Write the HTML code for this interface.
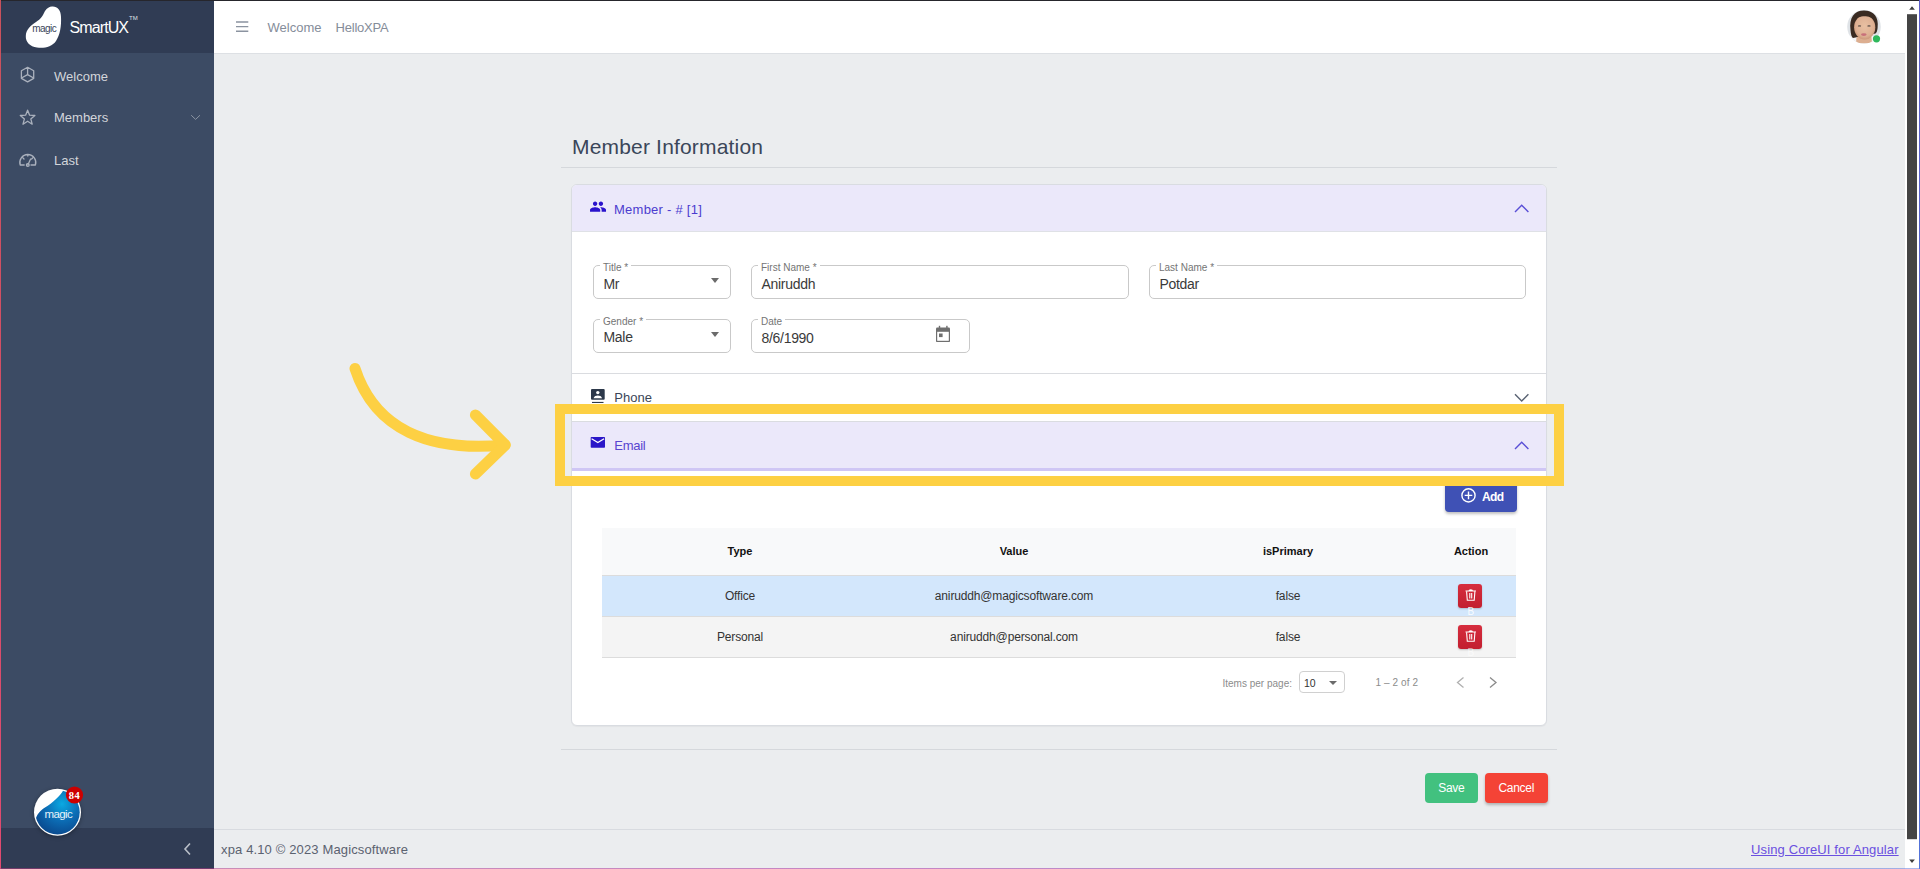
<!DOCTYPE html>
<html><head><meta charset="utf-8">
<style>
*{box-sizing:border-box;margin:0;padding:0}
html,body{width:1920px;height:869px;overflow:hidden;background:#ebedef;font-family:"Liberation Sans",sans-serif}
.a{position:absolute;white-space:nowrap}
#sidebar{position:absolute;left:0;top:0;width:214px;height:869px;background:#3c4b64}
#brand{position:absolute;left:0;top:0;width:214px;height:53px;background:#303c54}
#sfoot{position:absolute;left:0;top:828px;width:214px;height:41px;background:#303c54}
#header{position:absolute;left:214px;top:0;width:1691px;height:54px;background:#fff;border-bottom:1px solid #dde0e4}
.nav{position:absolute;left:54px;font-size:13px;color:#d3d6db;line-height:13px}
#footer{position:absolute;left:214px;top:829px;width:1691px;height:40px;background:#ebedef;border-top:1px solid #d8dbe0}
#scroll{position:absolute;left:1905px;top:0;width:15px;height:869px;background:#fff}
.frameL{position:absolute;left:0;top:0;width:1px;height:869px;background:linear-gradient(#c9525c,#e04a70)}
.frameT{position:absolute;left:0;top:0;width:1920px;height:1px;background:#26262c}
.frameR{position:absolute;left:1919px;top:0;width:1px;height:869px;background:linear-gradient(#5b5dc8,#5272d8)}
.frameB{position:absolute;left:0;top:868px;width:1920px;height:1px;background:linear-gradient(90deg,rgba(176,60,125,.53) 0%,rgba(163,41,160,.53) 47%,rgba(116,69,178,.53) 73%,rgba(93,122,222,.53) 100%)}
.hr{position:absolute;left:561px;width:996px;height:1px;background:#d5d8dc}
#card{position:absolute;left:571px;top:184px;width:976px;height:542px;background:#fff;border:1px solid #d9dce1;border-radius:6px;box-shadow:0 1px 1px rgba(0,0,0,.04)}
.ph{position:absolute;left:0;width:974px;height:46px}
.fld{position:absolute;border:1px solid #c9c9c9;border-radius:5px;background:#fff}
.lbl{position:absolute;font-size:10px;line-height:10px;color:#747474;background:#fff;padding:0 3px;top:-3.5px;left:6px}
.val{position:absolute;font-size:14px;line-height:14px;color:#3a3a3a;left:9.5px;top:11px;letter-spacing:-0.3px}
.tri{position:absolute;width:0;height:0;border-left:4px solid transparent;border-right:4px solid transparent;border-top:5px solid #6b6b6b}
table{position:absolute;left:30px;top:343px;width:914px;border-collapse:collapse;font-size:12px;color:#333}
td,th{text-align:center;padding:0 0 0 2px;border-bottom:1px solid #dcdcdc}
th{height:47px;background:#f8f9fa;font-weight:bold;font-size:11px;color:#111}
td{height:41px;letter-spacing:-0.15px}
.del{display:inline-block;width:24px;height:24px;border-radius:3px;background:linear-gradient(#d62d3e,#c21f2f);vertical-align:middle;position:relative;box-shadow:0 1px 2px rgba(0,0,0,.2)}
.btn{position:absolute;border-radius:4px;color:#fff;font-size:12px;text-align:center;line-height:30px;letter-spacing:-0.3px}
</style></head><body>
<div id="sidebar"></div>
<div id="brand"></div>
<div id="sfoot"></div>
<div id="header"></div>
<div id="footer"></div>
<div id="scroll"></div>

<!-- brand -->
<svg class="a" style="left:0;top:0" width="214" height="53" viewBox="0 0 214 53">
  <path d="M52 6.5 C57 6 61 10 61 17 C61.5 26 60 35 56 41 C52 47 44 48.5 37 47.5 C30 46.5 25.5 42 25.8 36 C26 30 30 26 36 22 C41 19 42.5 16 45 11 C47 8 49.5 6.6 52 6.5Z" fill="#fff"/>
  <text x="32.3" y="32.2" font-family="Liberation Sans" font-size="10" fill="#3a4559" letter-spacing="-0.55">magic</text>
</svg>
<div class="a" style="left:69.5px;top:20px;font-size:16px;line-height:16px;color:#fff;letter-spacing:-0.9px">SmartUX</div>
<div class="a" style="left:129px;top:15px;font-size:6px;line-height:6px;color:#dfe2e6">TM</div>

<!-- nav -->
<div class="nav" style="top:69.5px">Welcome</div>
<div class="nav" style="top:111.3px">Members</div>
<div class="nav" style="top:154.3px">Last</div>
<svg class="a" style="left:0;top:53px" width="214" height="130" viewBox="0 53 214 130" fill="none" stroke="#aab1bd" stroke-width="1.3" stroke-linejoin="round" stroke-linecap="round">
  <path d="M27.6 67.3 L33.7 70.8 L33.7 78.4 L27.6 81.9 L21.4 78.4 L21.4 70.8 Z M27.6 67.3 L27.6 74.6 L21.9 77.8 M27.6 74.6 L33.2 77.8"/>
  <path d="M27.6 110.2 L29.6 115.2 L34.9 115.5 L30.8 118.9 L32.2 124.2 L27.6 121.2 L23 124.2 L24.4 118.9 L20.3 115.5 L25.6 115.2 Z"/>
  <path d="M20.2 165 A8 8 0 1 1 35.4 165 L31 165 M24.2 165 L20.2 165 M27.8 165 L30.6 159 M23 158 L24 159 M27.8 154.5 L27.8 156 M32.6 158 L31.6 159"/>
  <circle cx="27.8" cy="165" r="1.4"/>
  <path d="M191.5 115.5 L195.6 119.4 L199.7 115.5" stroke="#8c95a3" stroke-width="1"/>
</svg>

<!-- header -->
<svg class="a" style="left:230px;top:15px" width="25" height="25" viewBox="230 15 25 25"><path d="M236 22h12.3M236 26.6h12.3M236 31.2h12.3" stroke="#8b93a0" stroke-width="1.4"/></svg>
<div class="a" style="left:267.5px;top:21px;font-size:13px;line-height:13px;color:#858d9a">Welcome</div>
<div class="a" style="left:335.5px;top:21px;font-size:13px;line-height:13px;color:#858d9a;letter-spacing:-0.2px">HelloXPA</div>

<!-- avatar -->
<svg class="a" style="left:1840px;top:6px" width="48" height="44" viewBox="1840 6 48 44">
  <defs><clipPath id="ac"><circle cx="1864" cy="26.8" r="16.8"/></clipPath>
  <radialGradient id="skin" cx="0.5" cy="0.45" r="0.6"><stop offset="0" stop-color="#e8c0a2"/><stop offset="0.7" stop-color="#deb093"/><stop offset="1" stop-color="#c48f70"/></radialGradient></defs>
  <circle cx="1864" cy="26.8" r="16.8" fill="#dfe3e7"/>
  <g clip-path="url(#ac)">
    <rect x="1844" y="36" width="40" height="10" fill="#f4f5f6"/>
    <path d="M1850.5 30 C1849 18 1854 10.5 1864 10.5 C1874 10.5 1879 17 1877.6 28 C1877.3 31 1876.5 33 1875.5 33.5 L1853 38 C1851.5 37 1850.8 34 1850.5 30Z" fill="#3a2b22"/>
    <path d="M1856 43.5 L1856.5 37 L1871.5 37 L1872 43.5Z" fill="#dcae90"/>
    <ellipse cx="1864.7" cy="27.3" rx="10.6" ry="12.2" fill="url(#skin)"/>
    <path d="M1853.5 22 C1854.5 15 1859 14 1864.5 14 C1870.5 14 1875 16 1875.8 22 C1873 17.5 1868 16.3 1864.5 16.3 C1860.5 16.3 1856 17.8 1853.5 22Z" fill="#3a2b22"/>
    <ellipse cx="1859.5" cy="25.9" rx="1.7" ry="0.9" fill="#7a665a"/>
    <ellipse cx="1869" cy="25.9" rx="1.7" ry="0.9" fill="#7a665a"/>
    <ellipse cx="1863.8" cy="34.6" rx="2.8" ry="1.4" fill="#c8707a"/>
  </g>
  <circle cx="1876.5" cy="38.8" r="3.6" fill="#2eb85c"/>
</svg>
<!-- scrollbar -->
<svg class="a" style="left:1905px;top:0" width="15" height="869" viewBox="1905 0 15 869">
  <path d="M1909.2 9.8 L1912 6.3 L1914.9 9.8Z" fill="#3d3d3d"/>
  <rect x="1907" y="14.2" width="10" height="825" fill="#444"/>
  <path d="M1909.2 859.4 L1912 863 L1914.9 859.4Z" fill="#3d3d3d"/>
</svg>

<!-- title -->
<div class="a" style="left:572px;top:135.5px;font-size:21px;line-height:21px;color:#3a4659;letter-spacing:0.18px">Member Information</div>
<div class="hr" style="top:167px"></div>
<div class="hr" style="top:749px"></div>

<div id="card">
  <!-- member header -->
  <div class="ph" style="top:0;background:#ebe8fa;border-radius:5px 5px 0 0"></div>
  <div class="ph" style="top:46px;height:1px;background:#dfe1e6"></div>
  <!-- phone -->
  <div class="ph" style="top:188px;height:1px;background:#dadce0"></div>
  <div class="ph" style="top:236px;height:1px;background:#dadce0"></div>
  <div class="ph" style="top:237px;height:46px;background:#ebe8fa"></div>
  <div class="ph" style="top:283px;height:3px;background:#cfc6f5"></div>

  <div class="fld" style="left:21px;top:80px;width:138px;height:34px"><span class="lbl">Title *</span><span class="val" style="top:10.5px">Mr</span><span class="tri" style="left:117px;top:12px"></span></div>
  <div class="fld" style="left:179px;top:80px;width:378px;height:34px"><span class="lbl">First Name *</span><span class="val">Aniruddh</span></div>
  <div class="fld" style="left:577px;top:80px;width:377px;height:34px"><span class="lbl">Last Name *</span><span class="val">Potdar</span></div>
  <div class="fld" style="left:21px;top:134px;width:138px;height:34px"><span class="lbl">Gender *</span><span class="val" style="top:10px">Male</span><span class="tri" style="left:117px;top:12px"></span></div>
  <div class="fld" style="left:179px;top:134px;width:219px;height:34px"><span class="lbl">Date</span><span class="val">8/6/1990</span></div>

  <table>
    <tr><th style="width:274px">Type</th><th style="width:274px">Value</th><th style="width:274px">isPrimary</th><th>Action</th></tr>
    <tr style="background:#d3e7fc"><td>Office</td><td>aniruddh@magicsoftware.com</td><td>false</td><td style="padding:0"><span class="del"></span></td></tr>
    <tr style="background:#f4f4f4"><td>Personal</td><td>aniruddh@personal.com</td><td>false</td><td style="padding:0"><span class="del"></span></td></tr>
  </table>

  <!-- pagination -->
  <div class="a" style="left:650.5px;top:493.5px;font-size:10px;line-height:10px;color:#8c8c8c">Items per page:</div>
  <div class="fld" style="left:727px;top:486px;width:46px;height:22px;border-color:#d0d0d0;border-radius:4px"><span class="a" style="left:4px;top:6px;font-size:10.5px;line-height:10.5px;color:#333">10</span><span class="tri" style="left:28.5px;top:9px;border-left-width:4px;border-right-width:4px;border-top-width:4px"></span></div>
  <div class="a" style="left:803.5px;top:493px;font-size:10px;line-height:10px;color:#8c8c8c;letter-spacing:0.1px">1 – 2 of 2</div>
</div>

<!-- buttons -->
<div class="btn" style="left:1444.5px;top:480px;width:72px;height:32px;background:#3f51b5;box-shadow:0 2px 3px rgba(0,0,0,.25)"></div>
<div class="btn" style="left:1425px;top:773px;width:52.5px;height:30px;background:#42c17f">Save</div>
<div class="btn" style="left:1485px;top:773px;width:62.5px;height:30px;background:#f44336;box-shadow:0 2px 3px rgba(0,0,0,.25)">Cancel</div>


<!-- panel header texts -->
<div class="a" style="left:614px;top:203px;font-size:13px;line-height:13px;color:#4b3ccf;letter-spacing:0.25px">Member - # [1]</div>
<div class="a" style="left:614.3px;top:390.8px;font-size:13px;line-height:13px;color:#3b4658">Phone</div>
<div class="a" style="left:614.3px;top:439px;font-size:13px;line-height:13px;color:#5845d0;letter-spacing:-0.3px">Email</div>
<div class="a" style="left:1482px;top:490.6px;font-size:12px;line-height:12px;color:#fff;font-weight:bold;letter-spacing:-0.6px">Add</div>

<svg class="a" style="left:0;top:0" width="1920" height="869" viewBox="0 0 1920 869">
  <!-- people icon -->
  <g transform="translate(589.3 197.9) scale(0.727)" fill="#2a12cc"><path d="M16 11c1.66 0 2.99-1.34 2.99-3S17.66 5 16 5c-1.66 0-3 1.34-3 3s1.34 3 3 3zm-8 0c1.66 0 2.99-1.34 2.99-3S9.66 5 8 5C6.34 5 5 6.34 5 8s1.34 3 3 3zm0 2c-2.33 0-7 1.17-7 3.5V19h14v-2.5c0-2.33-4.67-3.5-7-3.5zm8 0c-.29 0-.62.02-.97.05 1.16.84 1.97 1.97 1.97 3.45V19h6v-2.5c0-2.33-4.67-3.5-7-3.5z"/></g>
  <!-- chevrons -->
  <path d="M1515 212 L1521.7 205.3 L1528.4 212" fill="none" stroke="#5a4fd6" stroke-width="1.4"/>
  <path d="M1515 394.3 L1521.7 401 L1528.4 394.3" fill="none" stroke="#596272" stroke-width="1.4"/>
  <path d="M1515 449 L1521.7 442.3 L1528.4 449" fill="none" stroke="#5a4fd6" stroke-width="1.4"/>
  <!-- contact icon -->
  <rect x="591" y="389" width="13.7" height="10.8" rx="1" fill="#2c384a"/>
  <circle cx="597.8" cy="392.6" r="1.7" fill="#fff"/>
  <path d="M593.6 398.2 C594 396 596 395.4 597.8 395.4 C599.6 395.4 601.6 396 602 398.2Z" fill="#fff"/>
  <rect x="592" y="401.9" width="11.5" height="1.1" fill="#2c384a"/>
  <!-- email icon -->
  <rect x="590.7" y="436.9" width="14.3" height="10.9" rx="0.8" fill="#2a16c8"/>
  <path d="M591.6 438.7 L597.85 442.6 L604.1 438.7" fill="none" stroke="#fff" stroke-width="1.2"/>
  <!-- calendar icon -->
  <g fill="#6f6f6f">
    <rect x="936" y="327.5" width="14" height="14.6" rx="1.2"/>
    <rect x="938.8" y="325.8" width="1.4" height="2.5"/><rect x="946.2" y="325.8" width="1.4" height="2.5"/>
  </g>
  <rect x="937.2" y="331.8" width="11.6" height="9" fill="#fff"/>
  <rect x="939" y="333.5" width="3.6" height="3.6" fill="#6f6f6f"/>
  <!-- add icon -->
  <circle cx="1468.5" cy="495.4" r="6.6" fill="none" stroke="#fff" stroke-width="1.4"/>
  <path d="M1468.5 491.6 V499.2 M1464.7 495.4 H1472.3" stroke="#fff" stroke-width="1.4"/>
  <!-- trash icons -->
  <g fill="none" stroke="#fff" stroke-width="1.1">
    <path d="M1466.6 591.6 L1467.3 600.2 H1474.2 L1474.9 591.6 M1465.5 591 H1476 M1469 590.8 C1469 589.5 1472.5 589.5 1472.5 590.8 M1469.8 593 V598.6 M1471.7 593 V598.6"/>
    <path d="M1466.6 632.6 L1467.3 641.2 H1474.2 L1474.9 632.6 M1465.5 632 H1476 M1469 631.8 C1469 630.5 1472.5 630.5 1472.5 631.8 M1469.8 634 V639.6 M1471.7 634 V639.6"/>
  </g>
  <text x="1470.8" y="614.6" text-anchor="middle" font-family="Liberation Sans" font-size="10" fill="#ffffff" fill-opacity="0.9">B</text>
  <text x="1470.8" y="655.6" text-anchor="middle" font-family="Liberation Sans" font-size="10" fill="#ffffff" fill-opacity="0.6">B</text>
  <!-- pager chevrons -->
  <path d="M1463.5 677.5 L1457.5 682.5 L1463.5 687.5" fill="none" stroke="#b0b0b0" stroke-width="1.3"/>
  <path d="M1490 677.5 L1496 682.5 L1490 687.5" fill="none" stroke="#8a8a8a" stroke-width="1.3"/>
  <!-- sidebar footer chevron -->
  <path d="M190 843.5 L185 849 L190 854.5" fill="none" stroke="#b9bfc8" stroke-width="1.6"/>
  <!-- magic badge -->
  <defs>
    <radialGradient id="mg" gradientUnits="userSpaceOnUse" cx="62" cy="804" r="30"><stop offset="0" stop-color="#0aa9e2"/><stop offset="0.55" stop-color="#0c6db5"/><stop offset="1" stop-color="#0a4d92"/></radialGradient>
    <clipPath id="mc"><circle cx="57.5" cy="812.2" r="22.2"/></clipPath>
  </defs>
  <circle cx="57.5" cy="812.2" r="23.5" fill="#fff" style="filter:drop-shadow(0 1px 2px rgba(0,0,0,.35))"/>
  <g clip-path="url(#mc)">
    <path d="M63.8 789.3 C60.5 796 53 802.5 45 807.5 C39.5 811 36.5 815 35.5 820 L34 840 L85 840 L85 785 Z" fill="url(#mg)"/>
  </g>
  <text x="44.5" y="818" font-family="Liberation Sans" font-size="11.5" fill="#e6f1f8" letter-spacing="-0.6">magic</text>
  <circle cx="74.5" cy="795" r="8.6" fill="#cc0000"/>
  <text x="74.5" y="798.8" text-anchor="middle" style="font-family:'Liberation Serif',serif;font-weight:bold;font-size:10.5px;letter-spacing:0.6px" fill="#fff">84</text>
  <!-- yellow box -->
  <rect x="560" y="409" width="999" height="72" fill="none" stroke="#fdd043" stroke-width="10"/>
  <!-- arrow -->
  <g fill="none" stroke="#fdd043" stroke-width="11" stroke-linecap="round" stroke-linejoin="round">
    <path d="M355 368.5 C375 430 430 452 505 445"/>
    <path d="M475.4 414.9 L505.3 445 L475.4 474"/>
  </g>
</svg>

<!-- footer -->
<div class="a" style="left:221px;top:843px;font-size:13px;line-height:13px;color:#5b6270;letter-spacing:0.14px">xpa 4.10 © 2023 Magicsoftware</div>
<div class="a" style="left:1751px;top:842.5px;font-size:13px;line-height:13px;color:#6a4fe0;text-decoration:underline;letter-spacing:0.13px">Using CoreUI for Angular</div>

<div class="frameT"></div><div class="frameL"></div><div class="frameR"></div><div class="frameB"></div>
</body></html>
